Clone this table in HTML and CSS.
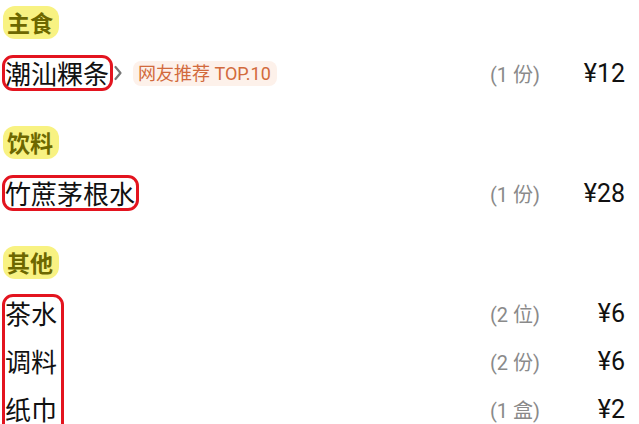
FILE: index.html
```html
<!DOCTYPE html>
<html lang="zh-CN">
<head>
<meta charset="utf-8">
<title>菜单</title>
<link rel="stylesheet" href="styles.css">
</head>
<body>
<div class="menu">
  <section class="section">
    <div class="cat"><span class="pill">主食</span></div>
    <div class="rows">
      <div class="row">
        <span class="name boxed">潮汕粿条</span>
        <svg class="chev" width="10" height="18" viewBox="0 0 10 18"><path d="M2.5 3 L7.5 9 L2.5 15" fill="none" stroke="#777777" stroke-width="2.2" stroke-linecap="round" stroke-linejoin="round"/></svg>
        <span class="tag">网友推荐 TOP.10</span>
        <span class="spacer"></span>
        <span class="qty">(1 份)</span>
        <span class="price">¥12</span>
      </div>
    </div>
  </section>
  <section class="section">
    <div class="cat"><span class="pill">饮料</span></div>
    <div class="rows">
      <div class="row">
        <span class="name boxed">竹蔗茅根水</span>
        <span class="spacer"></span>
        <span class="qty">(1 份)</span>
        <span class="price">¥28</span>
      </div>
    </div>
  </section>
  <section class="section">
    <div class="cat"><span class="pill">其他</span></div>
    <div class="rows group">
      <div class="row">
        <span class="name">茶水</span>
        <span class="spacer"></span>
        <span class="qty">(2 位)</span>
        <span class="price">¥6</span>
      </div>
      <div class="row">
        <span class="name">调料</span>
        <span class="spacer"></span>
        <span class="qty">(2 份)</span>
        <span class="price">¥6</span>
      </div>
      <div class="row">
        <span class="name">纸巾</span>
        <span class="spacer"></span>
        <span class="qty">(1 盒)</span>
        <span class="price">¥2</span>
      </div>
      <div class="group-box"></div>
    </div>
  </section>
</div>
</body>
</html>
```
FILE: styles.css
```css
html, body {
  margin: 0;
  padding: 0;
  background: #ffffff;
}
body {
  font-family: Roboto, "Noto Sans CJK SC", sans-serif;
  color: #111;
  width: 639px;
  height: 424px;
  overflow: hidden;
}
.menu {
  padding: 6px 14px 0 0;
  display: flex;
  flex-direction: column;
  gap: 29px;
}
.cat {
  display: flex;
  padding-left: 3px;
}
.pill {
  display: inline-block;
  background: #f8f282;
  color: #6d6800;
  font-family: "Noto Sans CJK SC", sans-serif;
  font-weight: 700;
  font-size: 23px;
  line-height: 33px;
  height: 33px;
  padding: 0 6px 0 4px;
  border-radius: 12px;
}
.rows {
  margin-top: 10px;
  display: flex;
  flex-direction: column;
}
.group {
  position: relative;
}
.row {
  height: 48px;
  display: flex;
  align-items: center;
  padding-left: 5px;
}
.name {
  font-family: "Noto Sans CJK SC", sans-serif;
  font-size: 26px;
  line-height: 30px;
  color: #111;
}
.boxed {
  border: 3px solid #e3141f;
  border-radius: 11px;
  margin-left: -3px;
  padding: 0 1px 0 0;
}
.chev {
  margin-left: 0;
  flex: none;
}
.tag {
  margin-left: 10px;
  background: #fdf1ea;
  color: #d26a3c;
  font-family: Roboto, "Noto Sans CJK SC", sans-serif;
  font-size: 18px;
  line-height: 25px;
  padding: 0 6px 0 5px;
  border-radius: 8px;
}
.spacer {
  flex: 1;
}
.qty {
  color: #8a8a8a;
  font-size: 20px;
  text-align: right;
}
.price {
  width: 85px;
  text-align: right;
  font-size: 25px;
  color: #111;
}
.group-box {
  position: absolute;
  left: 2px;
  top: 5px;
  width: 56px;
  height: 150px;
  border: 3px solid #e3141f;
  border-radius: 11px;
}
```
